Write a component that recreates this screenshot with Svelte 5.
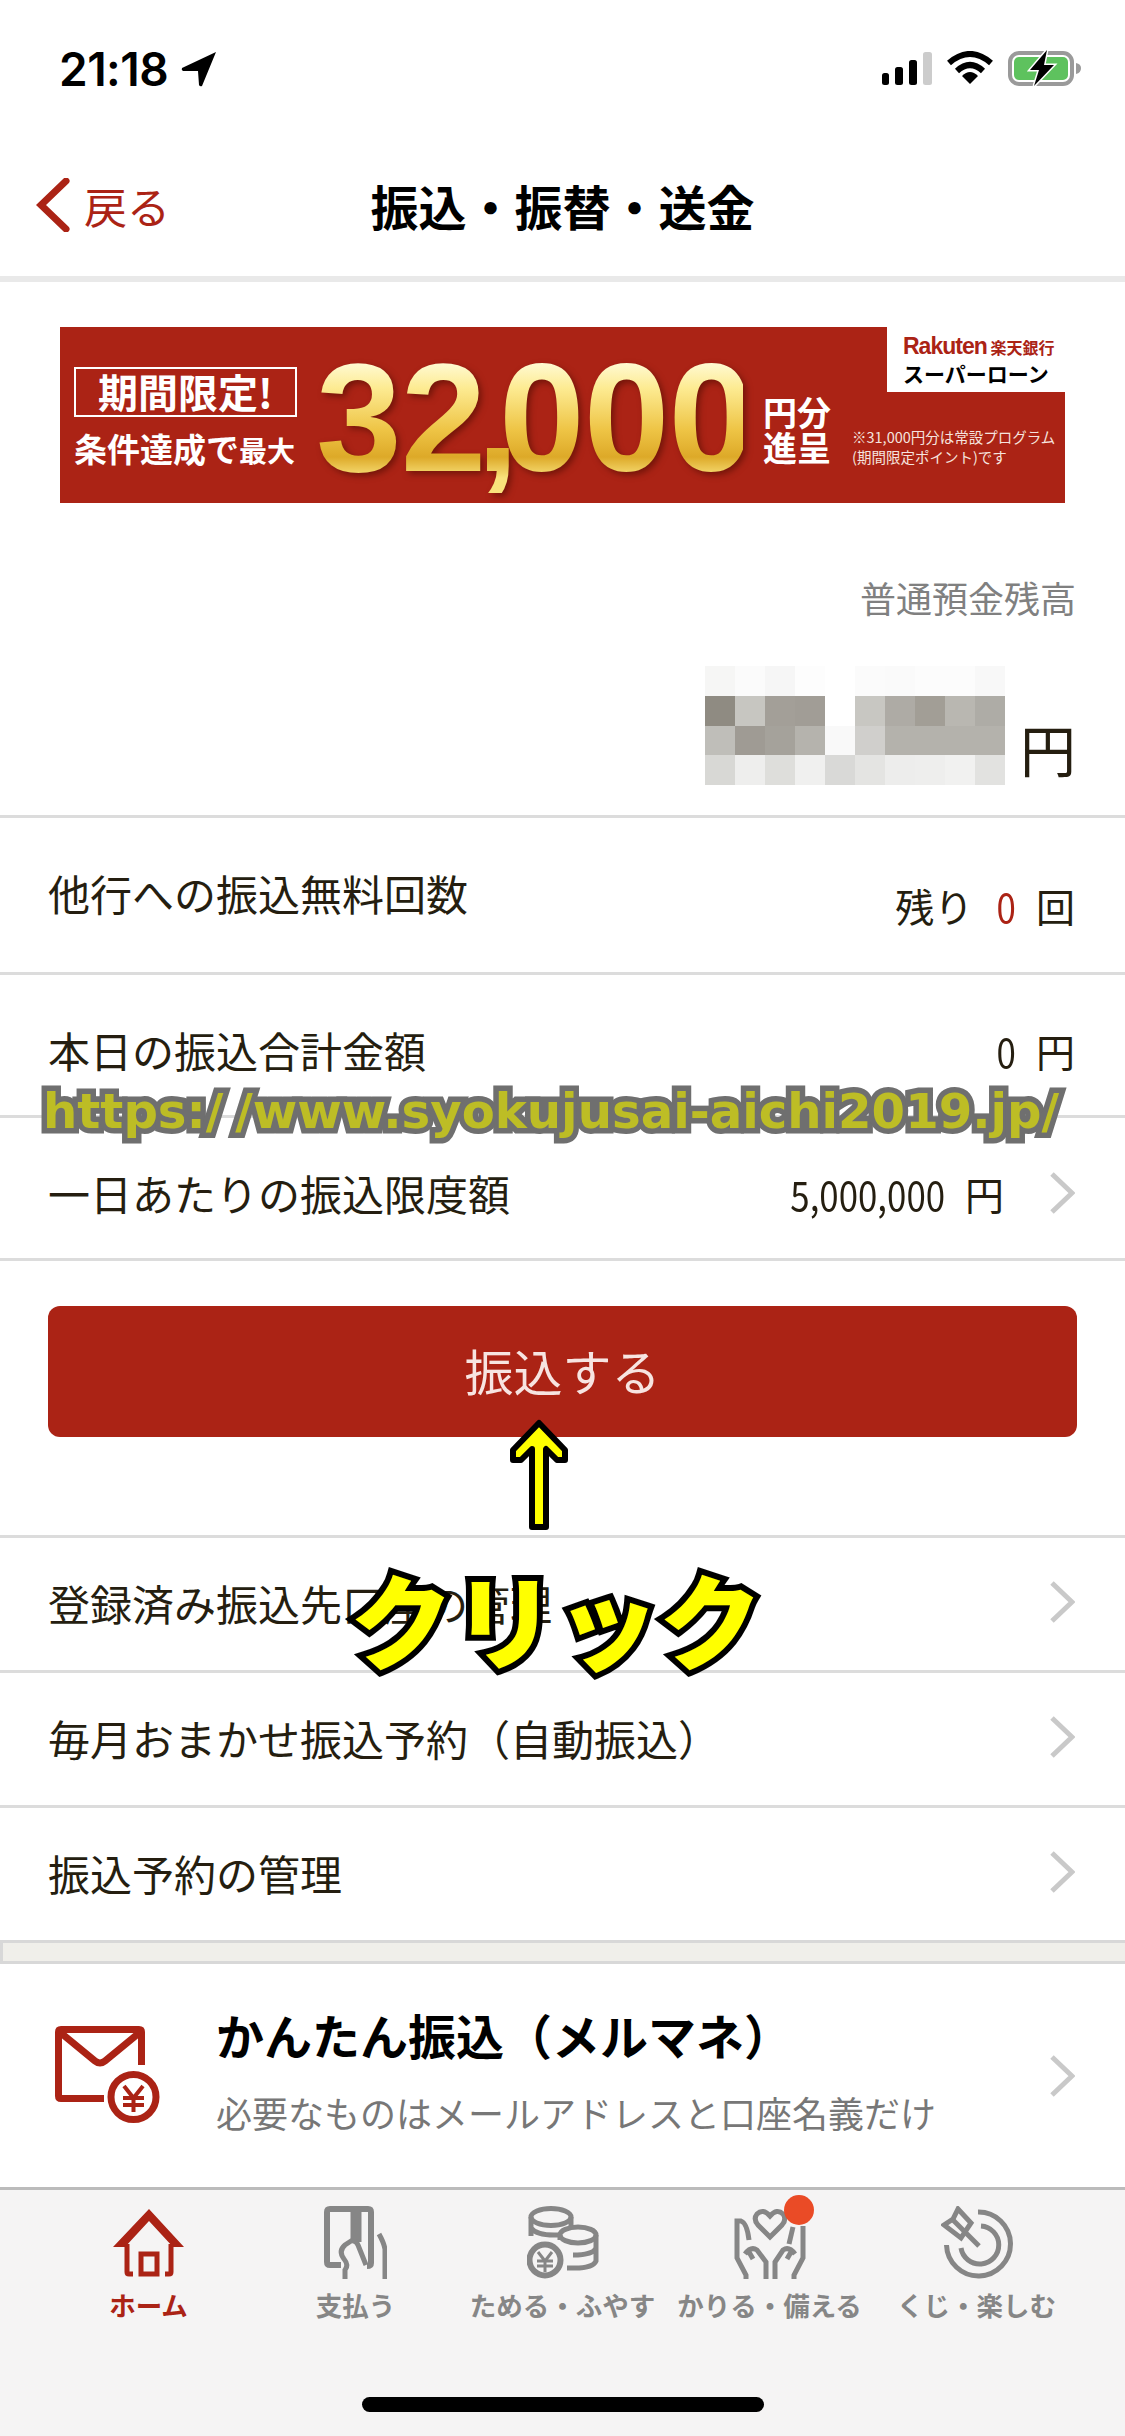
<script>
	const mosaic = [
		'#f6f6f5', '#fbfbfb', '#f6f6f6', '#fdfdfd', '#ffffff', '#fbfbfb', '#fafafa', '#fcfcfc', '#fcfcfc', '#f8f8f8',
		'#8f8b82', '#c7c6c1', '#a39f98', '#a19d96', '#ffffff', '#c8c7c2', '#aeaba5', '#a29e96', '#b9b7b1', '#aeaca6',
		'#bfbeb9', '#9f9b94', '#a5a29b', '#b5b3ad', '#f9f9f9', '#d0cfcc', '#b4b2ac', '#b4b2ac', '#b4b2ac', '#b4b2ac',
		'#d8d8d5', '#eeeeed', '#dededb', '#f0f0ef', '#d9d9d7', '#e4e4e2', '#ededec', '#eeeeed', '#f1f1f0', '#e2e2e0'
	];

	const links = ['登録済み振込先口座の管理', '毎月おまかせ振込予約（自動振込）', '振込予約の管理'];
</script>

{#snippet chevron()}
	<svg class="chevron" viewBox="0 0 26 42" width="26" height="42">
		<path d="M3 2 L23 21 L3 40" fill="none" stroke="#c9c9c9" stroke-width="5" />
	</svg>
{/snippet}

<div class="screen">
	<div class="status">
		<div class="clock">
			<span>21:18</span>
			<svg viewBox="0 0 36 36" width="36" height="36">
				<path d="M35 1 L1 17 Q0 19 2 20 L17 20 L18 34 Q19 36 21 35 Z" fill="#000" />
			</svg>
		</div>
		<div class="indicators">
			<svg viewBox="0 0 50 33" width="50" height="33">
				<rect x="0" y="21" width="7" height="12" rx="2.5" fill="#000" />
				<rect x="13" y="15" width="8" height="18" rx="2.5" fill="#000" />
				<rect x="27" y="8" width="8" height="25" rx="2.5" fill="#000" />
				<rect x="41" y="0" width="9" height="33" rx="2.5" fill="#ccc" />
			</svg>
			<svg viewBox="0 0 46 34" width="46" height="34">
				<path d="M2 12 Q23 -6 44 12" fill="none" stroke="#000" stroke-width="6" />
				<path d="M10 20 Q23 8 36 20" fill="none" stroke="#000" stroke-width="6" />
				<path d="M15 25 Q23 17 31 25 L23 33 Z" fill="#000" />
			</svg>
			<svg viewBox="0 0 74 36" width="74" height="36">
				<rect x="2" y="3" width="62" height="31" rx="9" fill="none" stroke="#9a9a9a" stroke-width="4" />
				<rect x="6" y="7" width="54" height="23" rx="5" fill="#5ec25e" />
				<path d="M68 13 Q73 14 73 18 Q73 23 68 24 Z" fill="#9a9a9a" />
				<path d="M39 0 L22 20 H31 L26 36 L46 15 H36 Z" fill="#000" stroke="#fff" stroke-width="3" paint-order="stroke" />
			</svg>
		</div>
	</div>

	<header class="nav">
		<div class="back">
			<svg viewBox="0 0 34 54" width="34" height="54">
				<path d="M30 3 L5 27 L30 51" fill="none" stroke="#ab2315" stroke-width="7" stroke-linecap="round" />
			</svg>
			<span>戻る</span>
		</div>
		<h1>振込・振替・送金</h1>
	</header>

	<div class="banner-wrap">
		<div class="banner">
			<div class="banner-left">
				<div class="limited">期間限定!</div>
				<div class="cond">条件達成で<small>最大</small></div>
			</div>
			<div class="amount">32<span class="comma">,</span>000</div>
			<div class="unit"><span>円分</span><span>進呈</span></div>
			<div class="notes">
				<p>※31,000円分は常設プログラム</p>
				<p>(期間限定ポイント)です</p>
			</div>
			<div class="brand">
				<div class="brand-top"><b>Rakuten</b> 楽天銀行</div>
				<div class="brand-name">スーパーローン</div>
			</div>
		</div>
	</div>

	<section class="balance">
		<div class="balance-label">普通預金残高</div>
		<div class="balance-amount">
			<div class="mosaic">
				{#each mosaic as c}
					<i style="background: {c}"></i>
				{/each}
			</div>
			<span>円</span>
		</div>
	</section>

	<div class="row row-free">
		<span>他行への振込無料回数</span>
		<span class="value low">残り <em class="num">0</em> 回</span>
	</div>
	<div class="row row-today">
		<span>本日の振込合計金額</span>
		<span class="value"><span class="num">0</span> 円</span>
	</div>
	<div class="row row-limit">
		<span>一日あたりの振込限度額</span>
		<span class="value"><span class="num">5,000,000</span> 円{@render chevron()}</span>
	</div>

	<div class="action">
		<button type="button">振込する</button>
	</div>

	{#each links as link}
		<div class="row link">
			<span>{link}</span>
			{@render chevron()}
		</div>
	{/each}

	<div class="divider"></div>

	<div class="promo">
		<svg class="mail" viewBox="0 0 110 100" width="110" height="100">
			<g fill="none" stroke="#ab2315">
				<path d="M49 72.5 H6 Q3.5 72.5 3.5 70 V6 Q3.5 3.5 6 3.5 H84 Q86.5 3.5 86.5 6 V39" stroke-width="7" />
				<path d="M6 7 L40 35 Q45 39 50 35 L84 7" stroke-width="7" />
				<circle cx="78.5" cy="71" r="22.5" stroke-width="7" />
				<path d="M69 60 L78.5 72 L88 60 M78.5 72 V86 M68 72 H89 M68 79 H89" stroke-width="4" />
			</g>
		</svg>
		<div class="promo-text">
			<div class="promo-title">かんたん振込（メルマネ）</div>
			<div class="promo-sub">必要なものはメールアドレスと口座名義だけ</div>
		</div>
		{@render chevron()}
	</div>

	<nav class="tabs">
		<div class="tab active">
			<svg viewBox="0 0 71 73" width="71" height="73">
				<path d="M36 3 L0 41 H12 L36 15 L60 41 H71 Z" fill="#ab2315" />
				<path d="M14 38 V66 Q14 68 16 68 H20 M58 38 V66 Q58 68 56 68 H52" fill="none" stroke="#ab2315" stroke-width="5" />
				<rect x="28" y="48" width="16" height="20" fill="none" stroke="#ab2315" stroke-width="5" />
			</svg>
			<span>ホーム</span>
		</div>
		<div class="tab">
			<svg viewBox="0 0 63 73" width="63" height="73">
				<g fill="none" stroke="#868686">
					<path d="M17 59 H6 Q3 59 3 56 V6 Q3 3 6 3 H44 Q47 3 47 6 V57 Q47 60 43 60" stroke-width="6" />
					<path d="M32 3 V36" stroke-width="11" />
					<path d="M21 73 V64 Q25 59 20 53 Q14 45 21 39 L27 35 Q32 34 34 39 L42 59" stroke-width="5" />
					<path d="M61 73 V43 Q60 37 55 28" stroke-width="5" />
				</g>
			</svg>
			<span>支払う</span>
		</div>
		<div class="tab">
			<svg viewBox="0 0 72 73" width="72" height="73">
				<g fill="none" stroke="#868686" stroke-width="5">
					<ellipse cx="24" cy="11" rx="20" ry="8.5" />
					<path d="M4 11 V30 M44 11 V21 M4 22 Q10 30 32 29" />
					<ellipse cx="51" cy="29" rx="18" ry="8" />
					<path d="M69 29 V55 Q66 62 48 62 H40 M69 42 Q66 49 46 49" />
					<path d="M33 29 V34" />
					<circle cx="18" cy="54" r="15.5" stroke-width="6" />
					<path d="M11 46 L18 55 L25 46 M18 55 V66 M10 55 H26 M10 60 H26" stroke-width="3" />
				</g>
			</svg>
			<span>ためる・ふやす</span>
		</div>
		<div class="tab">
			<div class="hands">
				<svg viewBox="0 0 72 73" width="72" height="73">
					<g fill="none" stroke="#868686" stroke-width="5">
						<path d="M36 31 L24 19 Q19 13 23 8 Q29 2 36 10 Q43 2 49 8 Q53 13 48 19 Z" />
						<path d="M12 73 V69 L3 52 V15 H7 Q13 17 15 34" />
						<path d="M11 48 Q17 40 23 44 L32 56 V73" />
						<path d="M19 53 L15 46" />
						<path d="M60 73 V69 L69 52 V20" />
						<path d="M61 48 Q55 40 49 44 L41 56 V73" />
						<path d="M53 53 L57 46" />
						<path d="M59 21 L55 38" />
					</g>
				</svg>
				<b class="dot"></b>
			</div>
			<span>かりる・備える</span>
		</div>
		<div class="tab">
			<svg viewBox="0 0 72 73" width="72" height="73">
				<g fill="none" stroke="#868686" stroke-width="5">
					<path d="M37 6 A32 32 0 1 1 5.500 39" />
					<path d="M40 20 A19 19 0 1 1 20 42" />
					<path d="M17 3 L30 17 L20 32 L3 19 L12 13 Z" />
					<path d="M11 13 L38 40" />
				</g>
			</svg>
			<span>くじ・楽しむ</span>
		</div>
		<div class="home-bar"></div>
	</nav>

	<div class="watermark">https:/ /www.syokujusai-aichi2019.jp/</div>
	<svg class="up-arrow" viewBox="0 0 66 112" width="66" height="112">
		<path d="M33 4 L59 31 V41 L51 41 L40 30 V108 H26 V30 L15 41 L7 41 V31 Z" fill="#ffff00" stroke="#000" stroke-width="6" stroke-linejoin="round" />
	</svg>
	<div class="click">クリック</div>
</div>

<style>
	:global(body) {
		margin: 0;
		background: #fff;
	}

	.screen {
		position: relative;
		width: 1125px;
		height: 2436px;
		overflow: hidden;
		display: flex;
		flex-direction: column;
		background: #fff;
		color: #251e10;
		font-family: 'Noto Sans CJK JP', 'Noto Sans', sans-serif;
	}

	.status {
		height: 100px;
		box-sizing: border-box;
		padding: 50px 43px 0 59px;
		display: flex;
		justify-content: space-between;
		align-items: flex-start;
	}
	.clock {
		display: flex;
		align-items: center;
		gap: 13px;
		height: 38px;
		font-family: Inter, sans-serif;
		font-weight: 600;
		font-size: 46px;
		letter-spacing: -0.500px;
		color: #000;
	}
	.indicators {
		display: flex;
		align-items: center;
		gap: 15px;
	}

	.nav {
		position: relative;
		height: 176px;
		border-bottom: 6px solid #e9e9e9;
		display: flex;
		align-items: center;
		justify-content: center;
	}
	.back {
		position: absolute;
		left: 36px;
		top: 78px;
		display: flex;
		align-items: center;
		gap: 14px;
		color: #ab2315;
		font-size: 43px;
		line-height: 54px;
	}
	h1 {
		margin: 34px 0 0;
		font-size: 48px;
		font-weight: 700;
		color: #000;
		line-height: 60px;
	}

	.banner-wrap {
		padding: 45px 60px 0;
	}
	.banner {
		position: relative;
		height: 176px;
		box-sizing: border-box;
		background: #ab2315;
		color: #fff;
		display: flex;
		align-items: flex-start;
		padding-left: 14px;
	}
	.banner-left {
		width: 223px;
		padding-top: 40px;
	}
	.limited {
		height: 50px;
		box-sizing: border-box;
		border: 2px solid #fff;
		text-align: center;
		font-size: 40px;
		line-height: 44px;
		font-weight: 700;
		white-space: nowrap;
	}
	.cond {
		margin-top: 13px;
		font-size: 33px;
		font-weight: 700;
		line-height: 36px;
		white-space: nowrap;
	}
	.cond small {
		font-size: 28px;
	}
	.amount {
		margin: 16px 0 0 19px;
		width: 427px;
		height: 150px;
		white-space: nowrap;
		font-family: 'Liberation Sans', sans-serif;
		font-weight: 700;
		font-size: 154px;
		line-height: 150px;
		letter-spacing: -1px;
		background: linear-gradient(180deg, #fffde0 10%, #fdeb92 30%, #eec445 58%, #dda928 76%, #f9e27c 90%);
		-webkit-background-clip: text;
		background-clip: text;
		color: transparent;
		filter: drop-shadow(3px 3px 3px rgba(70, 10, 0, 0.55));
	}
	.comma {
		margin: 0 -19px 0 -9px;
	}
	.unit {
		margin: 68px 0 0 20px;
		width: 68px;
		display: flex;
		flex-direction: column;
		gap: 2px;
		font-size: 34px;
		font-weight: 700;
		line-height: 33px;
		white-space: nowrap;
	}
	.notes {
		margin: 100px 0 0 21px;
		font-size: 14.500px;
		line-height: 20px;
		white-space: nowrap;
		color: #f6e3df;
	}
	.notes p {
		margin: 0;
	}
	.brand {
		position: absolute;
		right: 0;
		top: 0;
		width: 178px;
		height: 65px;
		box-sizing: border-box;
		padding: 9px 0 0 16px;
		background: #fff;
		color: #ab2315;
	}
	.brand-top {
		font-size: 16px;
		line-height: 21px;
		font-weight: 700;
		white-space: nowrap;
	}
	.brand-top b {
		font-family: 'Liberation Sans', sans-serif;
		font-size: 23px;
		letter-spacing: -1px;
	}
	.brand-name {
		margin-top: 3px;
		font-size: 21px;
		line-height: 25px;
		font-weight: 700;
		color: #000;
		white-space: nowrap;
	}

	.balance {
		height: 315px;
		box-sizing: border-box;
		padding: 72px 49px 0 0;
		border-bottom: 3px solid #dcdcdc;
		display: flex;
		flex-direction: column;
		align-items: flex-end;
	}
	.balance-label {
		font-size: 36px;
		line-height: 44px;
		color: #808080;
	}
	.balance-amount {
		margin-top: 47px;
		display: flex;
		align-items: flex-end;
		gap: 15px;
	}
	.mosaic {
		width: 300px;
		height: 119px;
		display: grid;
		grid-template-columns: repeat(10, 30px);
		grid-auto-rows: 1fr;
	}
	.balance-amount span {
		font-size: 56px;
		line-height: 60px;
		margin-bottom: 7px;
	}

	.row {
		box-sizing: border-box;
		padding: 0 50px 0 48px;
		display: flex;
		align-items: center;
		justify-content: space-between;
		border-bottom: 3px solid #dcdcdc;
		font-size: 42px;
		white-space: nowrap;
	}
	.row-free {
		height: 157px;
		padding-bottom: 5px;
	}
	.row-today {
		height: 143px;
		padding-top: 9px;
	}
	.row-limit {
		height: 143px;
		padding-top: 9px;
	}
	.link {
		height: 135px;
		padding-bottom: 4px;
	}
	.value {
		display: flex;
		align-items: center;
		gap: 20px;
		font-size: 39px;
	}
	.low {
		padding-top: 24px;
	}
	.value em {
		font-style: normal;
		color: #ab2315;
	}
	.num {
		display: inline-block;
		font-size: 41px;
		transform: scaleX(0.85);
		transform-origin: right center;
	}
	.chevron {
		flex: none;
	}
	.value .chevron {
		margin-left: 25px;
	}

	.action {
		height: 277px;
		box-sizing: border-box;
		padding: 45px 48px 0;
		border-bottom: 3px solid #dcdcdc;
	}
	button {
		display: block;
		width: 100%;
		height: 131px;
		padding: 0 0 5px;
		border: none;
		border-radius: 12px;
		background: #ab2315;
		color: #f7e4e1;
		font-family: inherit;
		font-size: 49px;
	}

	.divider {
		height: 24px;
		margin-top: -3px;
		flex: none;
		box-sizing: border-box;
		border: 3px solid #d8d8d8;
		border-right: none;
		background: #f0efea;
	}

	.promo {
		height: 223px;
		flex: none;
		box-sizing: border-box;
		padding: 0 50px 0 55px;
		display: flex;
		align-items: center;
	}
	.mail {
		flex: none;
		margin-right: 51px;
	}
	.promo-text {
		flex: 1;
		margin-bottom: 13px;
	}
	.promo-title {
		font-size: 48px;
		font-weight: 700;
		line-height: 60px;
		color: #000;
	}
	.promo-sub {
		margin-top: 26px;
		font-size: 36px;
		line-height: 44px;
		color: #777;
	}

	.tabs {
		position: relative;
		flex: 1;
		box-sizing: border-box;
		padding: 16px 45px 0;
		border-top: 3px solid #bbb;
		background: #f5f4f4;
		display: grid;
		grid-template-columns: repeat(5, 207px);
		align-content: start;
	}
	.tab {
		display: flex;
		flex-direction: column;
		align-items: center;
		gap: 8px;
		color: #868686;
		font-size: 26.500px;
		font-weight: 700;
		line-height: 36px;
		white-space: nowrap;
	}
	.tab svg {
		display: block;
	}
	.tab.active {
		color: #ab2315;
	}
	.hands {
		position: relative;
	}
	.dot {
		position: absolute;
		right: -8px;
		top: -11px;
		width: 30px;
		height: 30px;
		border-radius: 50%;
		background: #ea4b26;
	}
	.home-bar {
		position: absolute;
		left: 362px;
		top: 207px;
		width: 402px;
		height: 15px;
		border-radius: 8px;
		background: #000;
	}

	.watermark {
		position: absolute;
		left: 43px;
		top: 1081px;
		font-family: 'DejaVu Sans', sans-serif;
		font-weight: 700;
		font-size: 48.200px;
		line-height: 60px;
		white-space: nowrap;
		color: #bdbd25;
		-webkit-text-stroke: 11px #6f6f6f;
		paint-order: stroke fill;
		word-spacing: -5px;
	}
	.up-arrow {
		position: absolute;
		left: 506px;
		top: 1419px;
	}
	.click {
		position: absolute;
		left: 350px;
		top: 1553px;
		font-size: 103px;
		line-height: 130px;
		font-weight: 900;
		color: #ffff00;
		-webkit-text-stroke: 12px #000;
		paint-order: stroke fill;
		white-space: nowrap;
	}
</style>
